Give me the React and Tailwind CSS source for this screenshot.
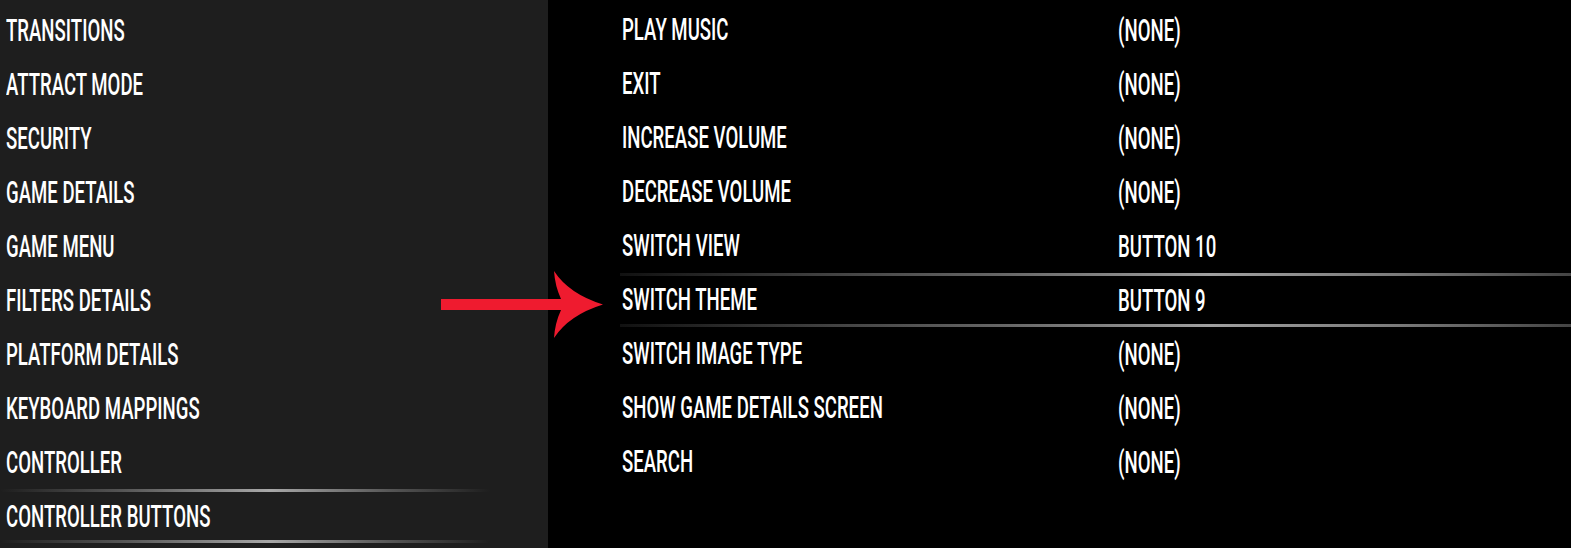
import React from "react";

const leftItems = [
  "TRANSITIONS",
  "ATTRACT MODE",
  "SECURITY",
  "GAME DETAILS",
  "GAME MENU",
  "FILTERS DETAILS",
  "PLATFORM DETAILS",
  "KEYBOARD MAPPINGS",
  "CONTROLLER",
  "CONTROLLER BUTTONS",
];

const rightItems = [
  ["PLAY MUSIC", "(NONE)"],
  ["EXIT", "(NONE)"],
  ["INCREASE VOLUME", "(NONE)"],
  ["DECREASE VOLUME", "(NONE)"],
  ["SWITCH VIEW", "BUTTON 10"],
  ["SWITCH THEME", "BUTTON 9"],
  ["SWITCH IMAGE TYPE", "(NONE)"],
  ["SHOW GAME DETAILS SCREEN", "(NONE)"],
  ["SEARCH", "(NONE)"],
];

function Label({ children }) {
  return (
    <span className="inline-block origin-left scale-x-[0.6] whitespace-nowrap text-[31px] font-medium leading-none text-white [font-family:Roboto,'Liberation_Sans',sans-serif]">
      {children}
    </span>
  );
}

function LeftLine() {
  return (
    <div className="h-[3px] w-[490px] bg-[linear-gradient(to_right,#1e1e1e_0%,#555_25%,#a8a8a8_55%,#555_80%,#1e1e1e_100%)]" />
  );
}

function RightLine() {
  return (
    <div className="h-[3px] w-full bg-[linear-gradient(to_right,#111_0%,#333_15%,#666_40%,#a0a0a0_62%,#7a7a7a_82%,#444_100%)]" />
  );
}

export default function App() {
  return (
    <div className="relative flex h-[548px] w-[1571px] overflow-hidden bg-black">
      <div className="flex w-[548px] shrink-0 flex-col bg-[#1e1e1e] pt-[3px]">
        {leftItems.map((t, i) =>
          i === leftItems.length - 1 ? (
            <div key={t} className="flex flex-col">
              <LeftLine />
              <div className="flex h-[48px] items-center pl-[6px]">
                <Label>{t}</Label>
              </div>
              <LeftLine />
            </div>
          ) : (
            <div key={t} className="flex h-[54px] items-center pl-[6px]">
              <Label>{t}</Label>
            </div>
          )
        )}
      </div>

      <div className="flex flex-1 flex-col pl-[72px] pt-[3px]">
        {rightItems.map(([a, b], i) =>
          i === 5 ? (
            <div key={a} className="flex flex-col">
              <RightLine />
              <div className="flex h-[48px] items-center pl-[2px]">
                <div className="w-[496px]">
                  <Label>{a}</Label>
                </div>
                <Label>{b}</Label>
              </div>
              <RightLine />
            </div>
          ) : (
            <div key={a} className="flex h-[54px] items-center pl-[2px]">
              <div className="w-[496px]">
                <Label>{a}</Label>
              </div>
              <Label>{b}</Label>
            </div>
          )
        )}
      </div>

      <svg
        className="absolute left-[441px] top-[270px]"
        width="164"
        height="70"
        viewBox="0 0 164 70"
      >
        <path
          d="M0 29 L120 29 Q114 16 113 1 Q128 24 162 34.5 Q128 45 113 68 Q114 53 120 40 L0 40 Z"
          fill="#ef1b2f"
        />
      </svg>
    </div>
  );
}
